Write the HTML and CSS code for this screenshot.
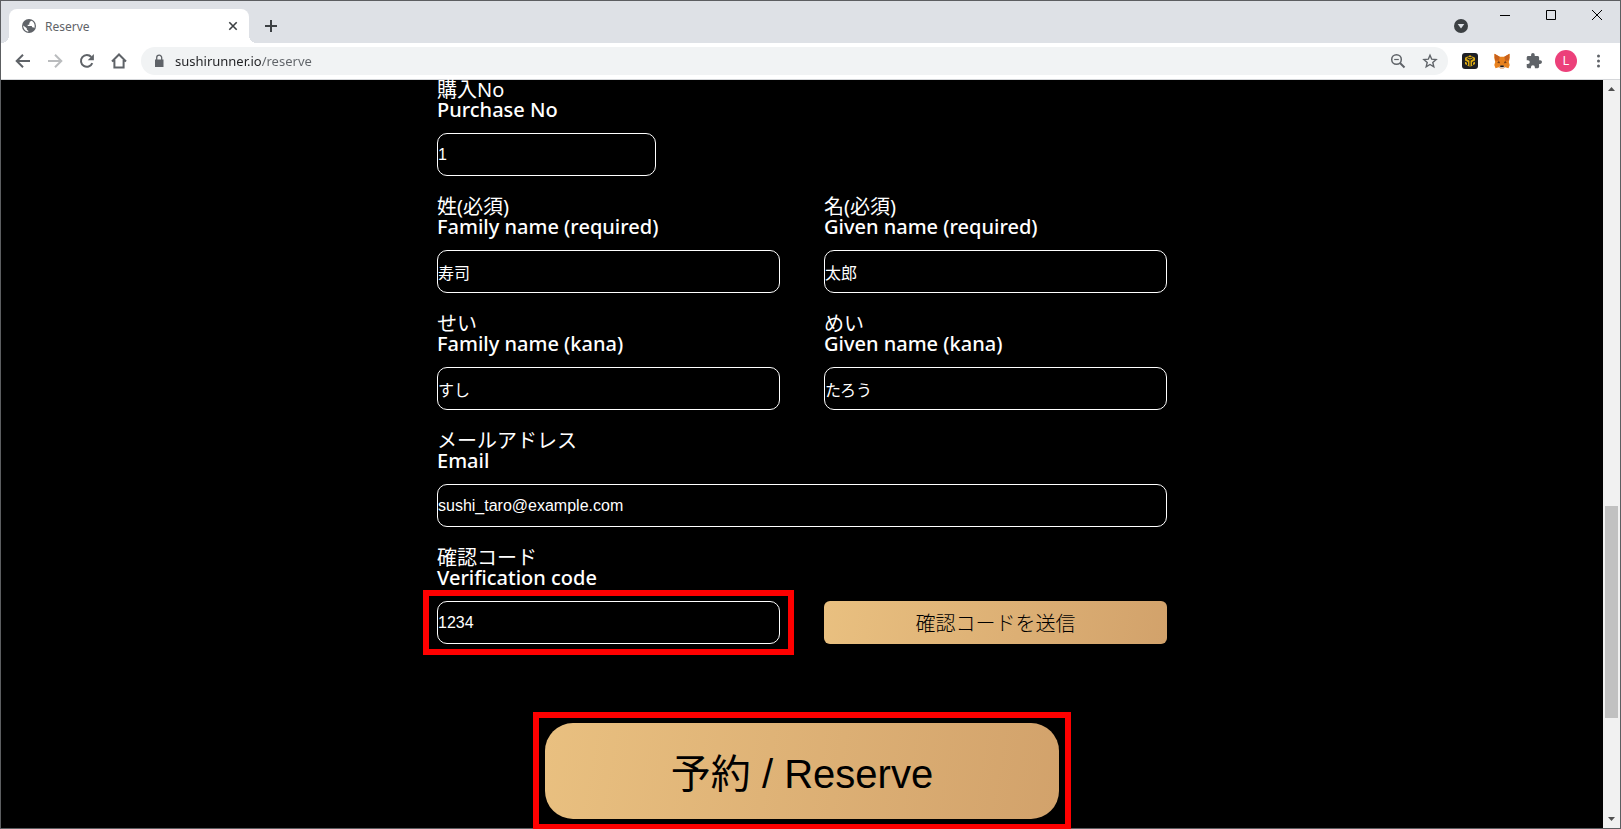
FILE: index.html
```html
<!DOCTYPE html>
<html lang="ja">
  <head>
    <meta charset="UTF-8" />
    <meta name="viewport" content="width=device-width, initial-scale=1.0" />
    <title>Reserve</title>
    <link rel="stylesheet" href="styles.css">
  </head>
  <body>
    <div class="window">
      <header class="tabstrip">
        <div class="tab">
          <svg class="icon" viewBox="0 0 16 16"><circle cx="8" cy="8" r="7" fill="#5f6368"/><path d="M2.2 7.6l3.6 2.6v1.3l1.5 1.2v1.1C4.400 13.400 2.200 11 2.200 7.600zM5.500 5.300h2.200c.9 0 1.100-.7 1.100-1.500l1.700-1.100c1.900.9 3.200 2.900 3.200 5.200 0 .9-.2 1.700-.5 2.400-.3-.8-.9-1-1.700-1h-.6V7.900H6.700V6.800h1.600V5.300z" fill="#fff"/></svg>
          <span class="tab-title">Reserve</span>
          <button class="icon-btn tab-close" aria-label="Close tab"><svg class="icon" viewBox="0 0 16 16"><path d="M4.300 4.300l7.400 7.400M11.700 4.300l-7.400 7.400" stroke="#3c4043" stroke-width="1.600"/></svg></button>
        </div>
        <button class="icon-btn new-tab" aria-label="New tab"><svg class="icon" viewBox="0 0 16 16"><path d="M8 2v12M2 8h12" stroke="#3c4043" stroke-width="2"/></svg></button>
        <button class="icon-btn tab-search" aria-label="Search tabs"><svg class="icon" viewBox="0 0 16 16"><circle cx="8" cy="8" r="7" fill="#3c4043"/><path d="M4.700 6h6.600L8 10.600z" fill="#dee1e6"/></svg></button>
        <div class="window-controls">
          <button class="icon-btn" aria-label="Minimize"><svg class="icon" viewBox="0 0 16 16"><path d="M3 8.500h10" stroke="#000"/></svg></button>
          <button class="icon-btn" aria-label="Maximize"><svg class="icon" viewBox="0 0 16 16"><path d="M3.500 3.500h9v9h-9z" stroke="#000" fill="none"/></svg></button>
          <button class="icon-btn" aria-label="Close"><svg class="icon" viewBox="0 0 16 16"><path d="M3 3l10 10M13 3L3 13" stroke="#000"/></svg></button>
        </div>
      </header>

      <nav class="toolbar">
        <button class="icon-btn" aria-label="Back"><svg class="icon" viewBox="0 0 16 16"><path d="M15 8H2.500M8 1.700L1.700 8 8 14.300" stroke="#5f6368" stroke-width="2" fill="none"/></svg></button>
        <button class="icon-btn" aria-label="Forward"><svg class="icon" viewBox="0 0 16 16"><path d="M1 8h12.500M8 1.700L14.300 8 8 14.300" stroke="#babcbe" stroke-width="2" fill="none"/></svg></button>
        <button class="icon-btn" aria-label="Reload"><svg class="icon" viewBox="0 0 16 16"><path d="M13.300 10.200A5.900 5.900 0 1 1 12.300 4" stroke="#5f6368" stroke-width="2" fill="none"/><path d="M14.900 1v6.200H8.700z" fill="#5f6368"/></svg></button>
        <button class="icon-btn" aria-label="Home"><svg class="icon" viewBox="0 0 16 16"><path d="M1 8.500L8 1.500l7 7M3.400 7v7.500h9.200V7" stroke="#5f6368" stroke-width="2" fill="none"/></svg></button>
        <div class="omnibox">
          <svg class="icon" viewBox="0 0 16 16"><path d="M4 6.500h8.500V14H4z" fill="#5f6368"/><path d="M5.700 7V4.700a2.500 2.500 0 0 1 5 0V7" stroke="#5f6368" stroke-width="1.300" fill="none"/></svg>
          <input class="url" type="text" aria-label="Address" value="sushirunner.io/reserve" />
          <button class="icon-btn" aria-label="Zoom"><svg class="icon" viewBox="0 0 16 16"><circle cx="6.500" cy="6.500" r="4.800" stroke="#5f6368" stroke-width="1.500" fill="none"/><path d="M10 10l4.500 4.500" stroke="#5f6368" stroke-width="2"/><path d="M4.200 6.500h4.600" stroke="#5f6368" stroke-width="1.200"/></svg></button>
          <button class="icon-btn" aria-label="Bookmark"><svg class="icon" viewBox="0 0 16 16"><path d="M8 2.200l1.700 4 4.400.4-3.300 2.900 1 4.300L8 11.500l-3.800 2.300 1-4.300-3.300-2.900 4.400-.4z" stroke="#5f6368" stroke-width="1.400" fill="none"/></svg></button>
        </div>
        <div class="extensions">
          <button class="icon-btn" aria-label="Wallet"><svg class="icon" viewBox="0 0 16 16"><rect width="16" height="16" rx="3" fill="#1e2026"/><path d="M8 2.200l5 2.500v6.300l-5 2.900-5-2.900V4.700z" fill="#e0ad10"/><path d="M4.800 5.600L8 7.300l3.200-1.700M8 7.300v2M3 8l2.600 1.400M13 8l-2.600 1.400M8 9.200v5M5.500 9v3.200M10.500 9v3.200M5.600 3.800L8 5l2.400-1.200" stroke="#1e2026" stroke-width="1.100" fill="none"/></svg></button>
          <button class="icon-btn" aria-label="MetaMask"><svg class="icon" viewBox="0 0 16 16"><path d="M.5.800l5.200 3h4.600l5.200-3 .3 4-1 4.200.9 3-1.200 3.200-3.300-.9-1.700 1.300h-3l-1.700-1.300-3.300.9L.3 12l.9-3-1-4.200z" fill="#e8821e"/><path d="M.5.800l5.200 3-.8 3.900-3.800-.2zM15.500.800l-5.200 3 .8 3.900 3.800-.2z" fill="#c8601b"/><path d="M4.900 7.700l1.300 2.600-3-.2zM11.100 7.700l-1.300 2.600 3-.2z" fill="#763d16"/><path d="M4.800 14.300l1.700-1.500h3l1.700 1.500-1.700 1.100h-3z" fill="#d5bfb2"/><path d="M6.400 12.600h3.200l.2 1.500H6.200z" fill="#161616"/></svg></button>
          <button class="icon-btn" aria-label="Extensions"><svg class="icon" viewBox="1 1 22 22"><path d="M20.500 11H19V7c0-1.100-.9-2-2-2h-4V3.500a2.500 2.500 0 0 0-5 0V5H4c-1.100 0-2 .9-2 2v3.800h1.500a2.700 2.700 0 0 1 0 5.400H2V20c0 1.100.9 2 2 2h3.800v-1.500a2.700 2.700 0 0 1 5.400 0V22H17c1.100 0 2-.9 2-2v-4h1.500a2.500 2.500 0 0 0 0-5z" fill="#5f6368"/></svg></button>
          <button class="icon-btn avatar" aria-label="Profile">L</button>
          <button class="icon-btn" aria-label="Menu"><svg class="icon" viewBox="0 0 16 16"><g fill="#5f6368"><circle cx="8.500" cy="3" r="1.500"/><circle cx="8.500" cy="8" r="1.500"/><circle cx="8.500" cy="13" r="1.500"/></g></svg></button>
        </div>
      </nav>

      <div class="viewport">
        <main class="page">
          <form class="form">
            <div class="field field-short">
              <label for="purchase">購入No <span class="en">Purchase No</span></label>
              <input type="text" id="purchase" value="1" />
            </div>
            <div class="field">
              <label for="family">姓(必須) <span class="en">Family name (required)</span></label>
              <input type="text" id="family" value="寿司" />
            </div>
            <div class="field">
              <label for="given">名(必須) <span class="en">Given name (required)</span></label>
              <input type="text" id="given" value="太郎" />
            </div>
            <div class="field">
              <label for="familyKana">せい <span class="en">Family name (kana)</span></label>
              <input type="text" id="familyKana" value="すし" />
            </div>
            <div class="field">
              <label for="givenKana">めい <span class="en">Given name (kana)</span></label>
              <input type="text" id="givenKana" value="たろう" />
            </div>
            <div class="field field-wide">
              <label for="email">メールアドレス <span class="en">Email</span></label>
              <input type="email" id="email" value="sushi_taro@example.com" />
            </div>
            <div class="field">
              <label for="code">確認コード <span class="en">Verification code</span></label>
              <div class="marked marked-input">
                <input type="text" id="code" value="1234" />
              </div>
            </div>
            <button type="button" class="gold send">確認コードを送信</button>
            <div class="marked marked-submit">
              <button type="button" class="gold submit">予約 / Reserve</button>
            </div>
          </form>
        </main>
        <div class="scrollbar">
          <svg class="arrow" viewBox="0 0 7 4"><path d="M0 4h7L3.500 0z" fill="#505050"/></svg>
          <div class="track"><div class="thumb"></div></div>
          <svg class="arrow" viewBox="0 0 7 4"><path d="M0 0h7L3.500 4z" fill="#505050"/></svg>
        </div>
      </div>
    </div>
  </body>
</html>
```

FILE: styles.css
```css
* {
  box-sizing: border-box;
}
html {
  overflow: hidden;
}
body {
  margin: 0;
  font-family: "Noto Sans", "Noto Sans CJK JP", sans-serif;
}
.window {
  display: flex;
  flex-direction: column;
  height: 100vh;
  border: 1px solid #5c5e61;
}

/* browser chrome */
.icon {
  display: block;
  width: 16px;
  height: 16px;
}
.icon-btn {
  display: block;
  flex: none;
  padding: 0;
  border: none;
  background: none;
}
.tabstrip {
  display: flex;
  flex: none;
  height: 42px;
  padding-left: 8px;
  background: #dee1e6;
}
.tab {
  position: relative;
  display: flex;
  align-items: center;
  width: 240px;
  margin-top: 8px;
  padding: 0 8px 0 12px;
  border-radius: 8px 8px 0 0;
  background: #fff;
}
.tab::before,
.tab::after {
  content: "";
  position: absolute;
  bottom: 0;
  width: 8px;
  height: 8px;
}
.tab::before {
  left: -8px;
  background: radial-gradient(circle at 0 0, #dee1e6 8px, #fff 8px);
}
.tab::after {
  right: -8px;
  background: radial-gradient(circle at 100% 0, #dee1e6 8px, #fff 8px);
}
.tab-title {
  flex: 1;
  padding-left: 8px;
  color: #5f6368;
  font-size: 12px;
}
.new-tab {
  margin: 8px auto 0 14px;
}
.tab-search {
  margin: 8px 20px 0 0;
}
.window-controls {
  display: flex;
  align-items: flex-start;
  gap: 30px;
  padding: 6px 15px 0 8px;
}
.toolbar {
  display: flex;
  align-items: center;
  flex: none;
  gap: 16px;
  height: 37px;
  padding: 0 14px;
  border-bottom: 1px solid #d5d7da;
  background: #fff;
}
.omnibox {
  display: flex;
  align-items: center;
  flex: 1;
  gap: 8px;
  height: 28px;
  margin: 0 -2px;
  padding: 0 10px;
  border-radius: 14px;
  background: #f1f3f4;
}
.omnibox .icon-btn {
  margin-left: 8px;
}
.url {
  flex: 1;
  padding: 0;
  border: none;
  outline: none;
  /* host dark, path grey */
  background: linear-gradient(90deg, #202124 86px, #5f6368 86px);
  -webkit-background-clip: text;
  background-clip: text;
  color: transparent;
  font-family: "Noto Sans", sans-serif;
  font-size: 13px;
}
.extensions {
  display: flex;
  align-items: center;
  gap: 16px;
}
.avatar {
  width: 22px;
  height: 22px;
  margin: 0 -3px;
  border-radius: 50%;
  background: #ec407a;
  color: #fff;
  font-family: Roboto, sans-serif;
  font-size: 12px;
}

/* page content */
.viewport {
  display: flex;
  flex: 1;
  min-height: 0;
}
.page {
  flex: 1;
  background: #000;
}
.form {
  display: grid;
  grid-template-columns: 1fr 1fr;
  gap: 21px 44px;
  width: 730px;
  max-width: 100%;
  margin: 0 auto;
}
.field label {
  display: block;
  margin-bottom: 13px;
  color: #fff;
  font-size: 20px;
  line-height: 20px;
}
.en {
  display: block;
  font-weight: 500;
}
.field input {
  display: block;
  width: 100%;
  height: 43px;
  padding: 0;
  border: 1px solid #fff;
  border-radius: 10px;
  background: transparent;
  color: #fff;
  font-family: "Liberation Sans", "Noto Sans CJK JP", sans-serif;
  font-size: 16px;
}
.field-short,
.field-wide {
  grid-column: 1 / -1;
}
.field-short input {
  width: 30%;
}
.gold {
  border: none;
  background: linear-gradient(100deg, #e9c080, #d2a26b);
  color: #000;
  font-family: "Liberation Sans", "Noto Sans CJK JP", sans-serif;
}
.send {
  align-self: end;
  height: 43px;
  border-radius: 6px;
  font-size: 20px;
  font-weight: 300;
}
.submit {
  display: block;
  width: 100%;
  height: 96px;
  border-radius: 28px;
  font-size: 40px;
}

/* red frames around the steps to take */
.marked {
  position: relative;
}
.marked::after {
  content: "";
  position: absolute;
  inset: -11px -14px;
  border: 6px solid #f00;
  pointer-events: none;
}
.marked-submit {
  grid-column: 1 / -1;
  justify-self: center;
  width: 514px;
  max-width: 100%;
  margin-top: 58px;
}
.marked-submit::after {
  inset: -11px -12px;
}

.scrollbar {
  display: flex;
  flex-direction: column;
  align-items: center;
  flex: none;
  width: 17px;
  padding: 7px 0;
  background: #f1f1f1;
}
.arrow {
  width: 7px;
  height: 4px;
}
.track {
  flex: 1;
  width: 13px;
  padding-top: 415px;
}
.thumb {
  height: 212px;
  background: #c1c1c1;
}
```
